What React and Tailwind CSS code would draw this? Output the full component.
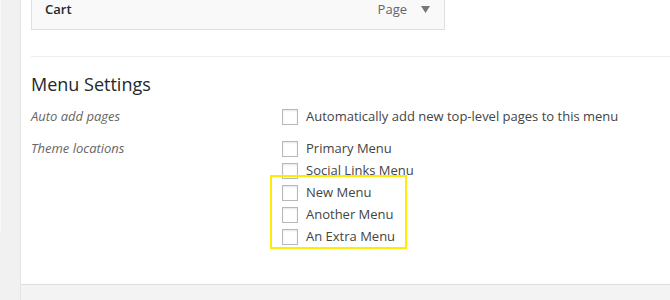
const font = { fontFamily: '"Open Sans", "Noto Sans", sans-serif' };

const Checkbox = () => (
  <span className="block h-[16px] w-[16px] shrink-0 border border-[#b4b9be] bg-white shadow-[inset_0_1px_2px_rgba(0,0,0,0.1)]" />
);

const CheckRow = ({ label }) => (
  <label className="flex h-[22px] items-center gap-[8px]">
    <Checkbox />
    <span className="text-[13px] text-[#444]">{label}</span>
  </label>
);

const locations = ['Primary Menu', 'Social Links Menu', 'New Menu', 'Another Menu', 'An Extra Menu'];

export default function App() {
  return (
    <div className="flex h-[300px] w-[670px] overflow-hidden bg-[#f1f1f1]" style={font}>
      {/* left edge of the admin page */}
      <div className="flex w-[21px] shrink-0 border-r border-[#e5e5e5]">
        <div className="h-[233px] w-[1px] bg-[#f7f7f7]" />
      </div>

      <div className="flex flex-1 flex-col bg-white">
        <div className="flex-1 pl-[10px]">
          {/* last menu item, cut at the top */}
          <div className="flex h-[30px] w-[414px] items-start justify-between border-x border-b border-[#dfdfdf] bg-[#f9f9f9] pl-[13px] pr-[14px]">
            <span className="text-[13px] leading-[19px] font-semibold text-[#23282d]">Cart</span>
            <span className="flex items-center gap-[14px] text-[13px] leading-[19px] text-[#666]">
              Page
              <svg width="9" height="7" viewBox="0 0 9 7">
                <path d="M0 0h9L4.5 7z" fill="#72777c" />
              </svg>
            </span>
          </div>

          <div className="mt-[26px] border-t border-[#eee]" />

          <h3 className="mt-[15px] text-[18px] leading-[24px] font-normal text-[#23282d]">Menu Settings</h3>

          <div className="mt-[10px] flex">
            <div className="w-[251px] text-[13px] italic text-[#666]">
              <div className="flex h-[22px] items-center">Auto add pages</div>
            </div>
            <CheckRow label="Automatically add new top-level pages to this menu" />
          </div>

          <div className="mt-[10px] flex">
            <div className="w-[251px] text-[13px] italic text-[#666]">
              <div className="flex h-[22px] items-center">Theme locations</div>
            </div>
            <div className="relative flex flex-col">
              {locations.map((l) => (
                <CheckRow key={l} label={l} />
              ))}
              {/* highlight around the new locations */}
              <div className="pointer-events-none absolute left-[-12px] top-[37px] h-[74px] w-[137px] border-2 border-[#ffeb0a]" />
            </div>
          </div>
        </div>

        <div className="h-[16px] border-t border-[#dedede] bg-[#f3f3f3]" />
      </div>
    </div>
  );
}
